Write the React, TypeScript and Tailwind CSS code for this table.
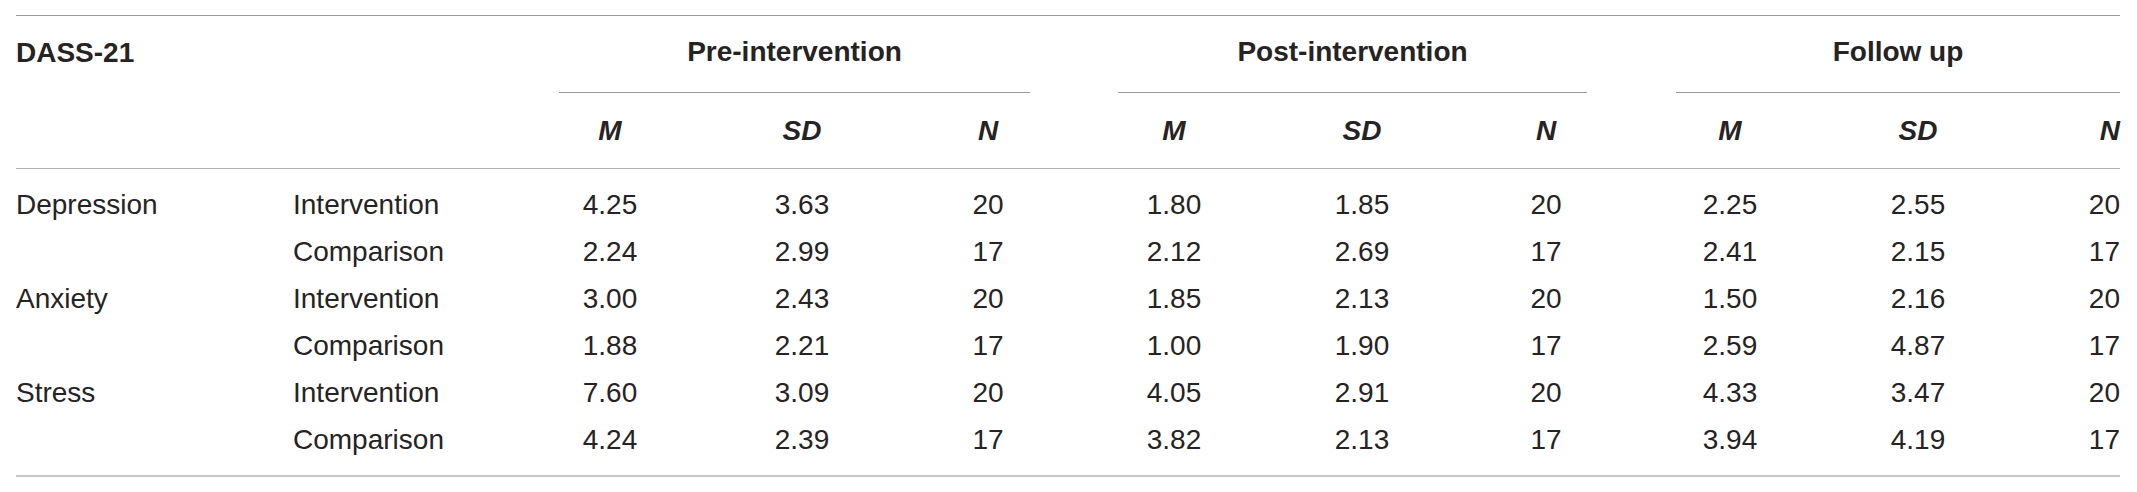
import React from "react";

const grid =
  "grid grid-cols-[277px_219px_196px_188px_184px_188px_188px_180px_188px_188px_108px]";

type Row = { measure: string; group: string; v: string[] };

const rows: Row[] = [
  { measure: "Depression", group: "Intervention", v: ["4.25", "3.63", "20", "1.80", "1.85", "20", "2.25", "2.55", "20"] },
  { measure: "", group: "Comparison", v: ["2.24", "2.99", "17", "2.12", "2.69", "17", "2.41", "2.15", "17"] },
  { measure: "Anxiety", group: "Intervention", v: ["3.00", "2.43", "20", "1.85", "2.13", "20", "1.50", "2.16", "20"] },
  { measure: "", group: "Comparison", v: ["1.88", "2.21", "17", "1.00", "1.90", "17", "2.59", "4.87", "17"] },
  { measure: "Stress", group: "Intervention", v: ["7.60", "3.09", "20", "4.05", "2.91", "20", "4.33", "3.47", "20"] },
  { measure: "", group: "Comparison", v: ["4.24", "2.39", "17", "3.82", "2.13", "17", "3.94", "4.19", "17"] },
];

const sub = ["M", "SD", "N", "M", "SD", "N", "M", "SD", "N"];

export default function App() {
  return (
    <div
      className="w-[2137px] h-[492px] bg-white pt-[15px] pl-[16px] text-[28px] text-[#262324]"
      style={{ fontFamily: '"Liberation Sans", Arial, sans-serif' }}
    >
      <div className="w-[2104px]">
        <div className="h-[1px] bg-[#9a9a9a]" />
        {/* header row 1 */}
        <div className={`${grid} h-[77px]`}>
          <div className="flex items-center pb-[4px] font-bold">DASS-21</div>
          <div />
          <div className="col-span-3 ml-[47px] mr-[50px] flex items-center justify-center pb-[4px] border-b border-[#9a9a9a] font-bold">
            Pre-intervention
          </div>
          <div className="col-span-3 ml-[38px] mr-[49px] flex items-center justify-center pb-[4px] border-b border-[#9a9a9a] font-bold">
            Post-intervention
          </div>
          <div className="col-span-3 ml-[40px] flex items-center justify-center pb-[4px] border-b border-[#9a9a9a] font-bold">
            Follow up
          </div>
        </div>
        {/* header row 2 */}
        <div className={`${grid} h-[76px] items-center border-b border-[#b4b4b4]`}>
          <div />
          <div />
          {sub.map((s, i) => (
            <div
              key={i}
              className={`font-bold italic ${i === 8 ? "text-right" : "text-center"}`}
            >
              {s}
            </div>
          ))}
        </div>
        {/* body */}
        <div className="pt-[12px] pb-[12px] border-b-2 border-[#c8c8c8]">
          {rows.map((r, ri) => (
            <div key={ri} className={`${grid} h-[47px] items-center`}>
              <div>{r.measure}</div>
              <div>{r.group}</div>
              {r.v.map((v, i) => (
                <div key={i} className={i === 8 ? "text-right" : "text-center"}>
                  {v}
                </div>
              ))}
            </div>
          ))}
        </div>
      </div>
    </div>
  );
}
